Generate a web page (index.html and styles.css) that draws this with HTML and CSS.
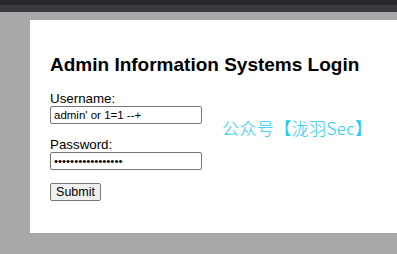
FILE: index.html
```html
<!DOCTYPE html>
<html>
<head>
<meta charset="utf-8">
<link rel="stylesheet" href="styles.css">
</head>
<body>
<div class="topbar"></div>
<div class="subbar"></div>
<div class="stage">
  <div class="panel">
    <h1 class="title">Admin Information Systems Login</h1>
    <form class="login">
      <label class="lbl">Username:</label>
      <input class="field" type="text" value="admin' or 1=1 --+">
      <label class="lbl lbl-pass">Password:</label>
      <input class="field" type="password" value="aaaaaaaaaaaaaaaaa">
      <button class="submit" type="button">Submit</button>
    </form>
    <div class="watermark">公众号【泷羽Sec】</div>
  </div>
</div>
</body>
</html>
```

FILE: styles.css
```css
html, body {
  margin: 0;
  padding: 0;
  height: 100%;
  overflow: hidden;
}
body {
  background: #aaa8ab;
  font-family: "Liberation Sans", Arial, sans-serif;
}
.topbar {
  height: 5px;
  background: #29272b;
}
.subbar {
  height: 7px;
  background: #3b393d;
}
.stage {
  padding-top: 8px;
  padding-left: 30px;
}
.panel {
  position: relative;
  background: #ffffff;
  height: 213px;
  box-sizing: border-box;
  padding: 33px 20px 0 20px;
}
.title {
  margin: 0 0 15px 0;
  font-size: 19px;
  font-weight: bold;
  color: #000;
  line-height: 23px;
}
.login {
  display: flex;
  flex-direction: column;
  align-items: flex-start;
}
.lbl {
  font-size: 13.33px;
  line-height: 15px;
  color: #000;
}
.lbl-pass {
  margin-top: 13px;
}
.field {
  box-sizing: border-box;
  width: 152px;
  height: 18px;
  margin: 0;
  padding: 1px 3px;
  border: 1px solid #767676;
  border-radius: 2px;
  font-family: "Liberation Sans", Arial, sans-serif;
  font-size: 11.5px;
  color: #000;
  background: #fff;
}
.submit {
  margin-top: 13px;
  box-sizing: border-box;
  width: 51px;
  height: 18px;
  padding: 0;
  border: 1px solid #767676;
  border-radius: 2px;
  background: #efefef;
  font-family: "Liberation Sans", Arial, sans-serif;
  font-size: 12.5px;
  color: #000;
}
.watermark {
  position: absolute;
  left: 192px;
  top: 97px;
  font-family: "Noto Sans CJK SC", "Noto Sans", sans-serif;
  font-size: 17px;
  line-height: 22px;
  letter-spacing: 0.4px;
  font-weight: 300;
  color: #22cbf2;
}
```
